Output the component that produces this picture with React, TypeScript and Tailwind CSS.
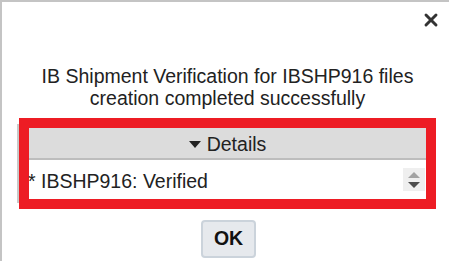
import { X } from "lucide-react";

export default function App() {
  return (
    <div className="w-[449px] h-[261px] bg-white border-t-2 border-l-2 border-[#c4c4c4] font-['Liberation_Sans',Arial,sans-serif] text-[#222] flex flex-col overflow-hidden">
      {/* Close */}
      <div className="flex justify-end pt-[8px] pr-[8px] h-[30px]">
        <X size={20} strokeWidth={3.5} className="text-[#333]" />
      </div>

      {/* Message */}
      <p className="mt-[33px] text-center text-[19.5px] leading-[22px] pl-[12px] pr-[8px] whitespace-nowrap">
        IB Shipment Verification for IBSHP916 files
        <br />
        creation completed successfully
      </p>

      {/* Details panel, highlighted */}
      <div className="mt-[9px] ml-[15px] flex items-center">
        <div className="w-[2px] h-[79px] bg-[#c9c9c9]" />
        <div className="w-[417px] border-[10px] border-[#ed1c24] bg-white">
          <div className="h-[32px] pt-[3px] bg-[#dcdcdc] border-b-2 border-[#bdbdbd] flex items-center justify-center gap-[6px] text-[19.5px]">
            <svg width="12" height="7" viewBox="0 0 12 7">
              <path d="M0 0h12L6 7z" fill="#222" />
            </svg>
            Details
          </div>
          <div className="h-[39px] flex items-center justify-between text-[19.5px]">
            <span className="pt-[4px] -ml-[1px]">* IBSHP916: Verified</span>
            <div className="w-[22px] h-[23px] bg-[#efefef] flex flex-col items-center justify-center gap-[4px] mr-[1px]">
              <svg width="12" height="6" viewBox="0 0 12 6">
                <path d="M6 0L12 6H0z" fill="#a3a3a3" />
              </svg>
              <svg width="12" height="6" viewBox="0 0 12 6">
                <path d="M0 0h12L6 6z" fill="#4d4d4d" />
              </svg>
            </div>
          </div>
        </div>
      </div>

      {/* OK */}
      <div className="flex justify-center mt-[11px] pl-[6px]">
        <button className="w-[55px] h-[38px] rounded-[4px] border-2 border-[#cbd3db] bg-[#e6e9ed] font-bold text-[19.5px] text-[#111]">
          OK
        </button>
      </div>
    </div>
  );
}
